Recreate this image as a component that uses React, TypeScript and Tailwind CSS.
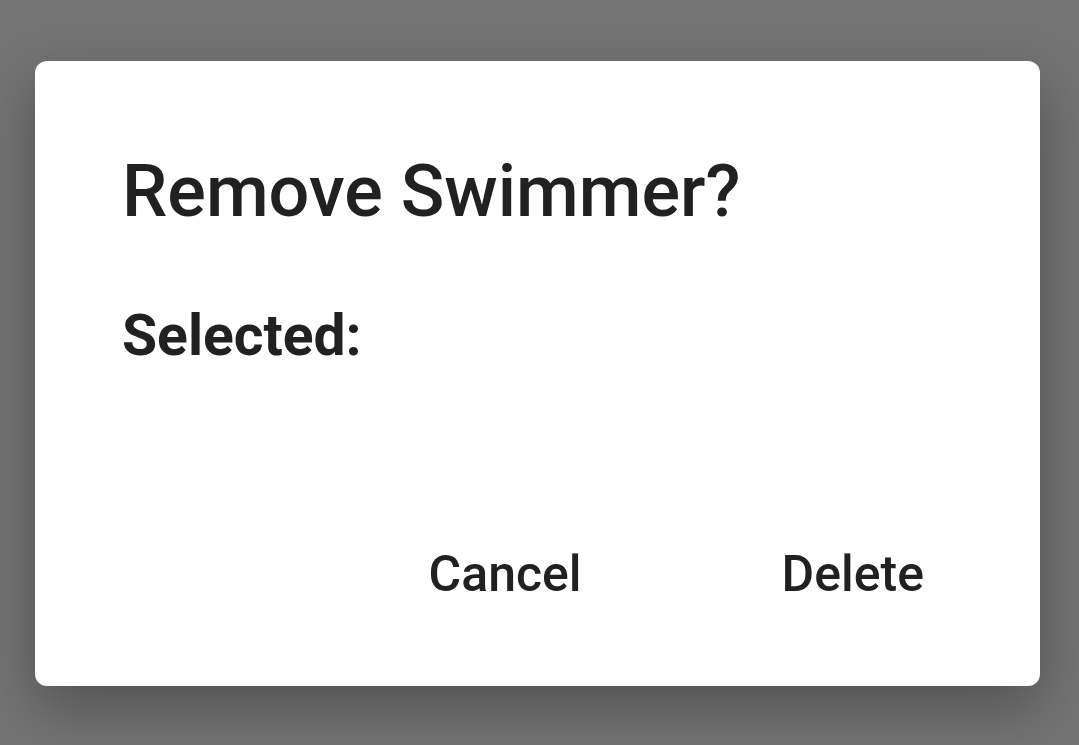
export default function App() {
  return (
    <div
      className="h-[745px] w-[1079px] overflow-hidden bg-[#747474] pt-[61px] pl-[35px]"
      style={{ fontFamily: "Roboto, 'Noto Sans', sans-serif" }}
    >
      <div className="flex h-[625px] w-[1005px] flex-col rounded-[12px] bg-white shadow-[0_22px_60px_rgba(0,0,0,0.3)]">
        <h2 className="pl-[87px] pt-[95px] text-[72px] leading-[72px] font-medium text-[#212121]">
          Remove Swimmer?
        </h2>
        <div className="mt-[79px] pl-[87px] text-[57px] leading-[57px] font-bold text-[#212121]">
          Selected:
        </div>
        <div className="mt-[185px] flex justify-end gap-[200px] pr-[116px]">
          <button className="text-[50px] leading-[50px] font-medium text-[#212121]">Cancel</button>
          <button className="text-[50px] leading-[50px] font-medium text-[#212121]">Delete</button>
        </div>
      </div>
    </div>
  );
}
